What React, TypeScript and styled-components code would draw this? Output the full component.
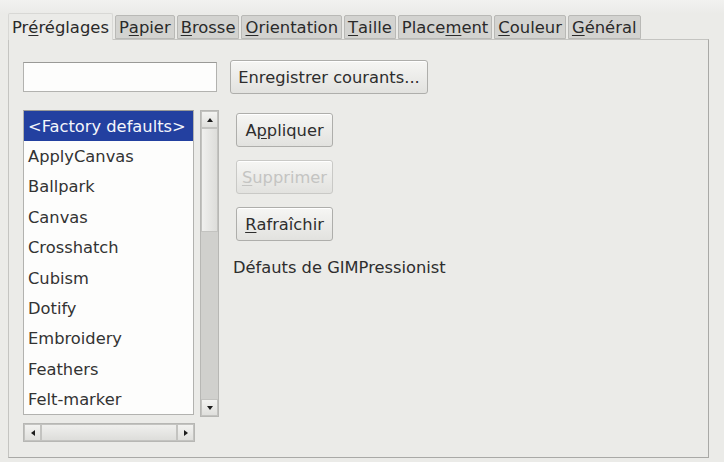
import React from "react"
import styled, { createGlobalStyle } from "styled-components"

const GlobalStyle = createGlobalStyle`
  html, body {
    margin: 0;
    padding: 0;
    background: #ebebe8;
    font-family: "DejaVu Sans", "Liberation Sans", sans-serif;
    color: #2e2e2e;
  }
`

const Window = styled.div`
  width: 724px;
  height: 462px;
  box-sizing: border-box;
  padding: 13px 15px 0 8px;
  background: linear-gradient(#f2f2f0 0, #ebebe8 14px);
  overflow: hidden;
`

const TabBar = styled.div`
  display: flex;
  align-items: flex-end;
  height: 26px;
  position: relative;
  z-index: 1;
`

const Tab = styled.div<{ $active?: boolean }>`
  box-sizing: border-box;
  height: ${p => (p.$active ? "27px" : "24px")};
  margin-bottom: ${p => (p.$active ? "-1px" : "0")};
  padding: 0 ${p => (p.$active ? "3px" : "3px")};
  display: flex;
  align-items: center;
  font-size: 16.4px;
  color: #2a2a2a;
  background: ${p => (p.$active ? "#ebebe8" : "#d3d3d0")};
  border: 1px solid ${p => (p.$active ? "#d8d8d5" : "#b9b9b6")};
  border-bottom: ${p => (p.$active ? "none" : "1px solid #b9b9b6")};
  border-radius: 2px 2px 0 0;
  margin-right: 2px;
  white-space: nowrap;
`

const Key = styled.span`
  text-decoration: underline;
  text-underline-offset: 2px;
`

const Panel = styled.div`
  box-sizing: border-box;
  width: 701px;
  height: 419px;
  border: 1px solid #c4c4c1;
  border-right-color: #a9a9a6;
  border-bottom-color: #a9a9a6;
  padding: 20px 0 0 14px;
`

const TopRow = styled.div`
  display: flex;
  align-items: center;
  gap: 13px;
`

const Entry = styled.div`
  box-sizing: border-box;
  width: 194px;
  height: 30px;
  background: #fdfdfc;
  border: 1px solid #b2b2af;
  border-top-color: #9a9a97;
`

const Button = styled.div<{ $width?: number; $disabled?: boolean }>`
  box-sizing: border-box;
  width: ${p => (p.$width ? `${p.$width}px` : "auto")};
  height: 34px;
  padding: 0 6px;
  display: flex;
  align-items: center;
  justify-content: center;
  font-size: 16.3px;
  color: ${p => (p.$disabled ? "#c4c4c2" : "#2e2e2e")};
  background: linear-gradient(#f6f6f4, #e2e2df);
  border: 1px solid ${p => (p.$disabled ? "#c9c9c6" : "#aeaeab")};
  border-radius: 3px;
  box-shadow: inset 0 1px 0 #ffffff;
  white-space: nowrap;
`

const MainRow = styled.div`
  display: flex;
  margin-top: 16px;
`

const ListColumn = styled.div`
  display: flex;
  flex-direction: column;
  gap: 5px;
  width: 196px;
`

const ListWrap = styled.div`
  display: flex;
  gap: 6px;
  height: 308px;
`

const List = styled.div`
  box-sizing: border-box;
  width: 171px;
  height: 305px;
  background: #fdfdfc;
  border: 1px solid #b2b2af;
  border-top-color: #9a9a97;
  overflow: hidden;
`

const Row = styled.div<{ $selected?: boolean }>`
  height: 30.4px;
  display: flex;
  align-items: center;
  padding-left: 4px;
  font-size: 16.3px;
  white-space: nowrap;
  color: ${p => (p.$selected ? "#f4f6fb" : "#333333")};
  background: ${p => (p.$selected ? "#2340a0" : "transparent")};
`

const VScroll = styled.div`
  box-sizing: border-box;
  width: 19px;
  height: 307px;
  display: flex;
  flex-direction: column;
  background: #d0d0cd;
  border: 1px solid #b7b7b4;
`

const HScroll = styled.div`
  box-sizing: border-box;
  width: 172px;
  height: 19px;
  display: flex;
  background: #d0d0cd;
  border: 1px solid #b7b7b4;
`

const Arrow = styled.div`
  flex: none;
  width: 17px;
  height: 17px;
  display: flex;
  align-items: center;
  justify-content: center;
  background: linear-gradient(#f4f4f2, #dededb);
  box-shadow: inset 0 0 0 1px #c3c3c0;
`

const Thumb = styled.div<{ $size: number; $vertical?: boolean }>`
  flex: ${p => (p.$size ? `0 0 ${p.$size}px` : "1")};
  background: linear-gradient(${p => (p.$vertical ? "90deg" : "180deg")}, #f1f1ef, #dcdcd9);
  box-shadow: inset 0 0 0 1px #c3c3c0;
`

const Track = styled.div`
  flex: 1;
`

const RightColumn = styled.div`
  display: flex;
  flex-direction: column;
  align-items: flex-start;
  gap: 13px;
  margin-left: 17px;
  padding-top: 3px;
`

const Caption = styled.div`
  font-size: 16.3px;
  color: #2e2e2e;
  margin: 4px 0 0 -3px;
`

const Tri = ({ dir }: { dir: "up" | "down" | "left" | "right" }) => {
  const pts = {
    up: "1,6 4,2 7,6",
    down: "1,2 4,6 7,2",
    left: "6,1 2,4 6,7",
    right: "2,1 6,4 2,7",
  }[dir]
  return (
    <svg width="8" height="8" viewBox="0 0 8 8">
      <polygon points={pts} fill="#1c1c1c" />
    </svg>
  )
}

const tabs: [string, number][] = [
  ["Préréglages", 2],
  ["Papier", 1],
  ["Brosse", 0],
  ["Orientation", 0],
  ["Taille", 0],
  ["Placement", 5],
  ["Couleur", 0],
  ["Général", 0],
]

const presets = [
  "<Factory defaults>",
  "ApplyCanvas",
  "Ballpark",
  "Canvas",
  "Crosshatch",
  "Cubism",
  "Dotify",
  "Embroidery",
  "Feathers",
  "Felt-marker",
]

const Mnemonic = ({ text, at }: { text: string; at: number }) => (
  <>
    {text.slice(0, at)}
    <Key>{text[at]}</Key>
    {text.slice(at + 1)}
  </>
)

const App = () => {
  return (
    <>
      <GlobalStyle />
      <Window>
        <TabBar>
          {tabs.map(([label, key], i) => (
            <Tab key={label} $active={i === 0}>
              <Mnemonic text={label} at={key} />
            </Tab>
          ))}
        </TabBar>
        <Panel>
          <TopRow>
            <Entry />
            <Button $width={198}>Enregistrer courants...</Button>
          </TopRow>
          <MainRow>
            <ListColumn>
              <ListWrap>
                <List>
                  {presets.map((p, i) => (
                    <Row key={p} $selected={i === 0}>{p}</Row>
                  ))}
                </List>
                <VScroll>
                  <Arrow><Tri dir="up" /></Arrow>
                  <Thumb $size={104} $vertical />
                  <Track />
                  <Arrow><Tri dir="down" /></Arrow>
                </VScroll>
              </ListWrap>
              <HScroll>
                <Arrow><Tri dir="left" /></Arrow>
                <Thumb $size={0} />
                <Arrow><Tri dir="right" /></Arrow>
              </HScroll>
            </ListColumn>
            <RightColumn>
              <Button $width={97}><Mnemonic text="Appliquer" at={1} /></Button>
              <Button $width={97} $disabled><Mnemonic text="Supprimer" at={0} /></Button>
              <Button $width={97}><Mnemonic text="Rafraîchir" at={0} /></Button>
              <Caption>Défauts de GIMPressionist</Caption>
            </RightColumn>
          </MainRow>
        </Panel>
      </Window>
    </>
  )
}

export default App
